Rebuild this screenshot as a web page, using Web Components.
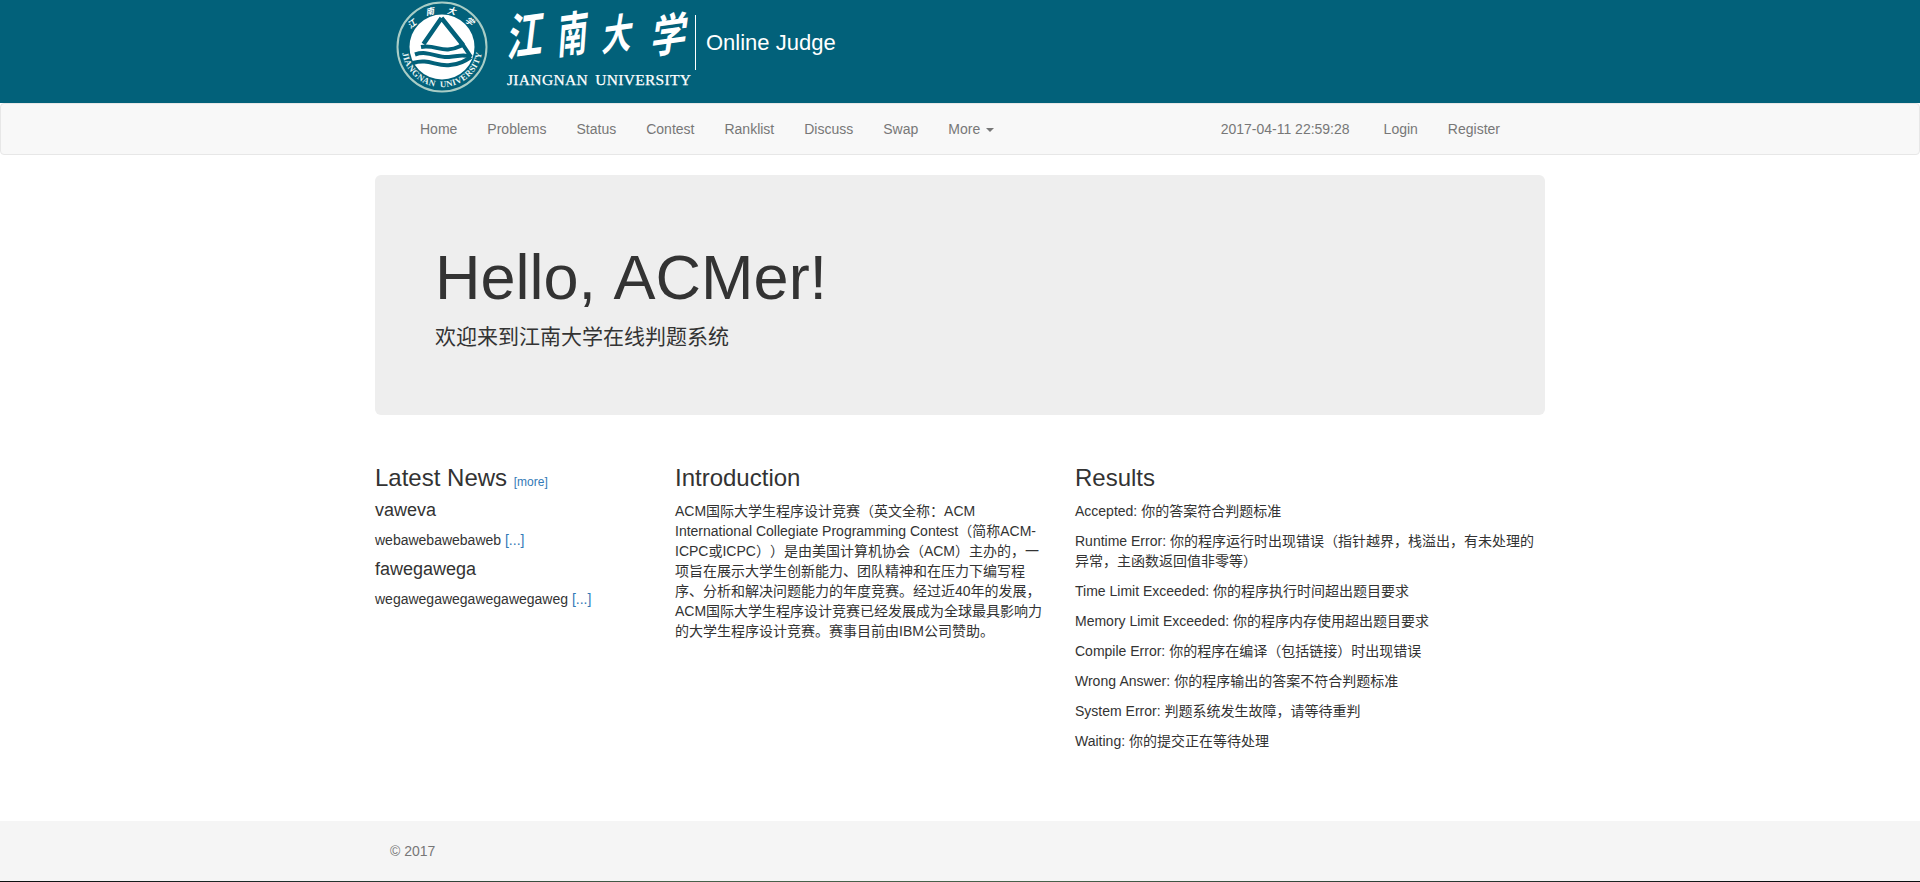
<!DOCTYPE html>
<html lang="zh-CN">
<head>
<meta charset="utf-8">
<title>Jiangnan University Online Judge</title>
<style>
html,body{margin:0;padding:0;height:100%}
body{font:14px/20px "Liberation Sans","Noto Sans CJK SC",sans-serif;color:#333;background:#fff;overflow:hidden;text-spacing-trim:space-all}
</style>
</head>
<body>
<oj-page>
  <oj-header slot="header">Online Judge</oj-header>
  <oj-navbar slot="nav">
    <oj-link>Home</oj-link><oj-link>Problems</oj-link><oj-link>Status</oj-link><oj-link>Contest</oj-link><oj-link>Ranklist</oj-link><oj-link>Discuss</oj-link><oj-link>Swap</oj-link><oj-link caret>More</oj-link>
    <oj-link slot="right" class="clock">2017-04-11 22:59:28</oj-link><oj-link slot="right">Login</oj-link><oj-link slot="right">Register</oj-link>
  </oj-navbar>
  <oj-jumbotron><span slot="title">Hello, ACMer!</span>欢迎来到江南大学在线判题系统</oj-jumbotron>
  <oj-columns>
    <oj-section heading="Latest News" more="[more]">
      <oj-news heading="vaweva">webawebawebaweb</oj-news>
      <oj-news heading="fawegawega">wegawegawegawegawegaweg</oj-news>
    </oj-section>
    <oj-section heading="Introduction">
      <oj-text>ACM国际大学生程序设计竞赛（英文全称：ACM International Collegiate Programming Contest（简称ACM-ICPC或ICPC））是由美国计算机协会（ACM）主办的，一项旨在展示大学生创新能力、团队精神和在压力下编写程序、分析和解决问题能力的年度竞赛。经过近40年的发展，ACM国际大学生程序设计竞赛已经发展成为全球最具影响力的大学生程序设计竞赛。赛事目前由IBM公司赞助。</oj-text>
    </oj-section>
    <oj-section heading="Results">
      <oj-text>Accepted: 你的答案符合判题标准</oj-text>
      <oj-text>Runtime Error: 你的程序运行时出现错误（指针越界，栈溢出，有未处理的异常，主函数返回值非零等）</oj-text>
      <oj-text>Time Limit Exceeded: 你的程序执行时间超出题目要求</oj-text>
      <oj-text>Memory Limit Exceeded: 你的程序内存使用超出题目要求</oj-text>
      <oj-text>Compile Error: 你的程序在编译（包括链接）时出现错误</oj-text>
      <oj-text style="word-spacing:.4px">Wrong Answer: 你的程序输出的答案不符合判题标准</oj-text>
      <oj-text>System Error: 判题系统发生故障，请等待重判</oj-text>
      <oj-text>Waiting: 你的提交正在等待处理</oj-text>
    </oj-section>
  </oj-columns>
  <oj-footer slot="footer">© 2017</oj-footer>
</oj-page>
<script>
function element(name, html, setup) {
  const template = document.createElement('template');
  template.innerHTML = html;
  customElements.define(name, class extends HTMLElement {
    constructor() {
      super();
      this.attachShadow({mode: 'open'}).append(template.content.cloneNode(true));
    }
    connectedCallback() { if (setup) setup(this, this.shadowRoot); }
  });
}

element('oj-page', `<style>
:host{display:flex;flex-direction:column;height:100vh}
main{width:1170px;margin:20px auto 0;flex:1}
</style><slot name="header"></slot><slot name="nav"></slot><main><slot></slot></main><slot name="footer"></slot>`);

element('oj-seal', `<style>:host{display:block;width:94px;height:94px}svg{display:block;overflow:visible}</style>
<svg width="94" height="94" viewBox="0 0 94 94">
<defs>
<path id="low" d="M6.800 47A40.200 40.200 0 0 0 87.200 47"/>
</defs>
<circle cx="47" cy="47" r="44.500" fill="none" stroke="#a9cdc6" stroke-width="2"/>
<circle cx="47" cy="47" r="32.500" fill="#fff"/>
<path d="M46.500 18L68 45M46.500 18L28.500 44" fill="none" stroke="#02617a" stroke-width="4.500"/>
<g fill="none" stroke="#02617a" stroke-width="4">
<path d="M26 47C38 45 44 50 53 49.500S64 46 68 45L76 57"/>
<path d="M20 54.500C33 50 42 58 54 57S67 54 76 57"/>
<path d="M18 63C33 58 42 67 55 65C65 64 70 61 76 57"/>
</g>
<text fill="#e8f4f3" font-family="Liberation Serif,serif" font-weight="700" font-size="8.800"><textPath href="#low" startOffset="6" textLength="114" lengthAdjust="spacing">JIANGNAN&#160; UNIVERSITY</textPath></text>
<g fill="#fff" font-family="Noto Sans CJK SC,sans-serif" font-size="8.500" font-weight="700" text-anchor="middle">
<text transform="translate(18.500 26.500) rotate(-38) skewX(-15)">江</text>
<text transform="translate(35.500 14.500) rotate(-12) skewX(-15)">南</text>
<text transform="translate(56 14) rotate(12) skewX(-15)">大</text>
<text transform="translate(72.500 23.500) rotate(38) skewX(-15)">学</text>
</g>
</svg>`);

element('oj-wordmark', `<style>:host{display:block;width:190px;height:94px}svg{display:block;overflow:visible}</style>
<svg width="190" height="94" viewBox="0 0 190 94" fill="#fff">
<g font-family="Noto Sans CJK SC,sans-serif" font-weight="700" font-size="42" text-anchor="middle">
<text transform="translate(20 54) rotate(-8) skewX(-15) scale(.86 1.180)">江</text>
<text transform="translate(68 52) rotate(-8) skewX(-12) scale(.72 1.140)">南</text>
<text transform="translate(112 49.500) rotate(-8) skewX(-16) scale(.72 .98)">大</text>
<text transform="translate(163.500 51.500) rotate(-8) skewX(-16) scale(.86 1.060)">学</text>
</g>
<text x="3" y="84.500" font-family="Liberation Serif,serif" font-size="15.500" textLength="184" word-spacing="3" stroke="#fff" stroke-width=".25">JIANGNAN UNIVERSITY</text>
</svg>`);

element('oj-header', `<style>
:host{display:block;height:103px;flex:none;background:#02617a;color:#fff}
.in{width:1170px;margin:auto;display:flex}
oj-seal{margin-left:20px}
oj-wordmark{margin-left:15px}
.name{margin:15px 0 0 1px;height:55px;box-sizing:border-box;border-left:1px solid #fff;padding:15px 0 0 10px;font-size:22px;line-height:26px;white-space:nowrap}
</style><div class="in"><oj-seal></oj-seal><oj-wordmark></oj-wordmark><div class="name"><slot></slot></div></div>`);

element('oj-navbar', `<style>
:host{display:block;flex:none;height:52px;box-sizing:border-box;border:1px solid #e7e7e7;border-radius:4px;background:#f8f8f8}
nav{width:1110px;margin:auto;display:flex;justify-content:space-between}
div{display:flex}
::slotted(.clock){margin-right:4px}
</style><nav><div><slot></slot></div><div><slot name="right"></slot></div></nav>`);

element('oj-link', `<style>
:host{display:block;padding:15px;color:#777;white-space:nowrap;line-height:20px}
i{display:none;width:0;height:0;margin-left:6px;vertical-align:middle;border-top:4px solid;border-left:4px solid transparent;border-right:4px solid transparent}
:host([caret]) i{display:inline-block}
</style><slot></slot><i></i>`);

element('oj-jumbotron', `<style>
:host{display:flow-root;background:#eee;border-radius:6px;padding:48px 60px;margin-bottom:30px}
h1{font-size:63px;line-height:69.300px;font-weight:400;word-spacing:3.500px;margin:20px 0 10px}
p{font-size:21px;line-height:30px;margin:0 0 15px}
</style><h1><slot name="title"></slot></h1><p><slot></slot></p>`);

element('oj-columns', `<style>
:host{display:grid;grid-template-columns:270px 370px 470px;column-gap:30px}
</style><slot></slot>`);

element('oj-section', `<style>
:host{display:block}
h2{font-size:24px;line-height:26px;font-weight:400;margin:20px 0 10px}
a{font-size:12px;line-height:1;color:#337ab7}
</style><h2><span></span> <a></a></h2><slot></slot>`, (host, root) => {
  root.querySelector('span').textContent = host.getAttribute('heading');
  const more = host.getAttribute('more');
  if (more) root.querySelector('a').textContent = more;
  else root.querySelector('a').remove();
});

element('oj-news', `<style>
:host{display:block}
h4{font-size:18px;line-height:19px;font-weight:400;margin:0 0 10px}
p{margin:0 0 10px}
a{color:#337ab7}
</style><h4></h4><p><slot></slot> <a>[...]</a></p>`, (host, root) => {
  root.querySelector('h4').textContent = host.getAttribute('heading');
});

element('oj-text', `<style>:host{display:block;margin-bottom:10px}</style><slot></slot>`);

element('oj-footer', `<style>
:host{display:flow-root;flex:none;height:61px;background:linear-gradient(90deg,#0c0e0f,#1f2d2b 15%,#47604a 35%,#47604a 55%,#2c3c35 75%,#0b0d10 92%) bottom/100% 1px no-repeat #f5f5f5;color:#777}
p{width:1140px;margin:20px auto 0}
</style><p><slot></slot></p>`);
</script>
</body>
</html>
